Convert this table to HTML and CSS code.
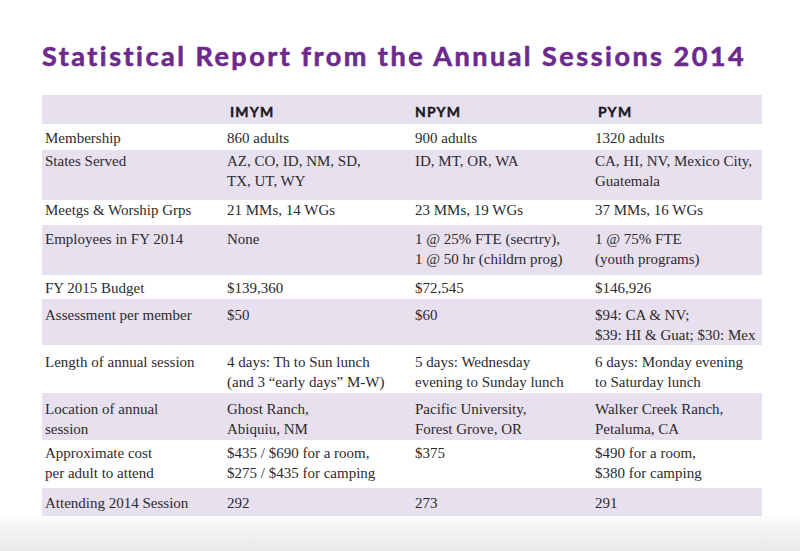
FILE: index.html
```html
<!DOCTYPE html>
<html lang="en">
<head>
<meta charset="utf-8">
<title>Statistical Report from the Annual Sessions 2014</title>
<link rel="stylesheet" href="styles.css">
</head>
<body>
<main class="page">
  <h1 class="title">Statistical Report from the Annual Sessions 2014</h1>
  <table class="report">
    <colgroup>
      <col class="c-label"><col class="c-imym"><col class="c-npym"><col class="c-pym">
    </colgroup>
    <thead>
      <tr class="head">
        <th></th><th class="h-imym">IMYM</th><th class="h-npym">NPYM</th><th class="h-pym">PYM</th>
      </tr>
    </thead>
    <tbody>
      <tr class="r1"><td>Membership</td><td>860 adults</td><td>900 adults</td><td>1320 adults</td></tr>
      <tr class="r2 shade"><td>States Served</td><td>AZ, CO, ID, NM, SD,<br>TX, UT, WY</td><td>ID, MT, OR, WA</td><td>CA, HI, NV, Mexico City,<br>Guatemala</td></tr>
      <tr class="r3"><td>Meetgs &amp; Worship Grps</td><td>21 MMs, 14 WGs</td><td>23 MMs, 19 WGs</td><td>37 MMs, 16 WGs</td></tr>
      <tr class="r4 shade"><td>Employees in FY 2014</td><td>None</td><td>1 @ 25% FTE (secrtry),<br>1 @ 50 hr (childrn prog)</td><td>1 @ 75% FTE<br>(youth programs)</td></tr>
      <tr class="r5"><td>FY 2015 Budget</td><td>$139,360</td><td>$72,545</td><td>$146,926</td></tr>
      <tr class="r6 shade"><td>Assessment per member</td><td>$50</td><td>$60</td><td>$94: CA &amp; NV;<br>$39: HI &amp; Guat; $30: Mex</td></tr>
      <tr class="r7"><td>Length of annual session</td><td>4 days: Th to Sun lunch<br>(and 3 “early days” M-W)</td><td>5 days: Wednesday<br>evening to Sunday lunch</td><td>6 days: Monday evening<br>to Saturday lunch</td></tr>
      <tr class="r8 shade"><td>Location of annual<br>session</td><td>Ghost Ranch,<br>Abiquiu, NM</td><td>Pacific University,<br>Forest Grove, OR</td><td>Walker Creek Ranch,<br>Petaluma, CA</td></tr>
      <tr class="r9"><td>Approximate cost<br>per adult to attend</td><td>$435 / $690 for a room,<br>$275 / $435 for camping</td><td>$375</td><td>$490 for a room,<br>$380 for camping</td></tr>
      <tr class="r10 shade"><td>Attending 2014 Session</td><td>292</td><td>273</td><td>291</td></tr>
    </tbody>
  </table>
</main>
</body>
</html>
```

FILE: styles.css
```css
html, body {
  margin: 0;
  padding: 0;
}

body {
  width: 800px;
  height: 551px;
  overflow: hidden;
  background: linear-gradient(to bottom, #ffffff 0, #ffffff 514px, #f4f4f4 528px, #e9e9e9 551px);
}

.page {
  padding: 40px 0 0 42px;
}

.title {
  margin: 0 0 23px 0;
  font-family: Lato, "Open Sans", sans-serif;
  font-weight: 700;
  font-size: 27px;
  line-height: 32px;
  letter-spacing: 2.5px;
  color: #6c2a8c;
  -webkit-text-stroke: 0.6px #6c2a8c;
  white-space: nowrap;
}

.report {
  width: 720px;
  border-collapse: collapse;
  border-spacing: 0;
  table-layout: fixed;
  font-family: "Liberation Serif", "Times New Roman", serif;
  font-size: 15px;
  line-height: 20px;
  color: #2e2a2c;
}

.c-label { width: 182px; }
.c-imym { width: 188px; }
.c-npym { width: 180px; }
.c-pym { width: 170px; }

.report th,
.report td {
  padding: 0 0 0 3px;
  text-align: left;
  vertical-align: top;
  font-weight: normal;
  white-space: nowrap;
  box-sizing: border-box;
}

.head {
  background: #e7e0ef;
}

.head th {
  height: 29px;
  padding-top: 7px;
  font-family: Lato, "Open Sans", sans-serif;
  font-weight: 700;
  font-size: 14px;
  letter-spacing: 1.2px;
  color: #1c1a1c;
  -webkit-text-stroke: 0.4px #1c1a1c;
}

.head .h-imym { padding-left: 6px; }
.head .h-npym { padding-left: 3px; }
.head .h-pym { padding-left: 6px; }

.shade {
  background: #e7e0ef;
}

.r1 td { height: 26px; padding-top: 4px; }
.r2 td { height: 50px; padding-top: 1px; }
.r3 td { height: 25px; padding-top: 0; }
.r4 td { height: 50px; padding-top: 4px; }
.r5 td { height: 24px; padding-top: 3px; }
.r6 td { height: 46px; padding-top: 6px; }
.r7 td { height: 48px; padding-top: 7px; }
.r8 td { height: 47px; padding-top: 6px; }
.r9 td { height: 48px; padding-top: 3px; }
.r10 td { height: 28px; padding-top: 5px; }
```
